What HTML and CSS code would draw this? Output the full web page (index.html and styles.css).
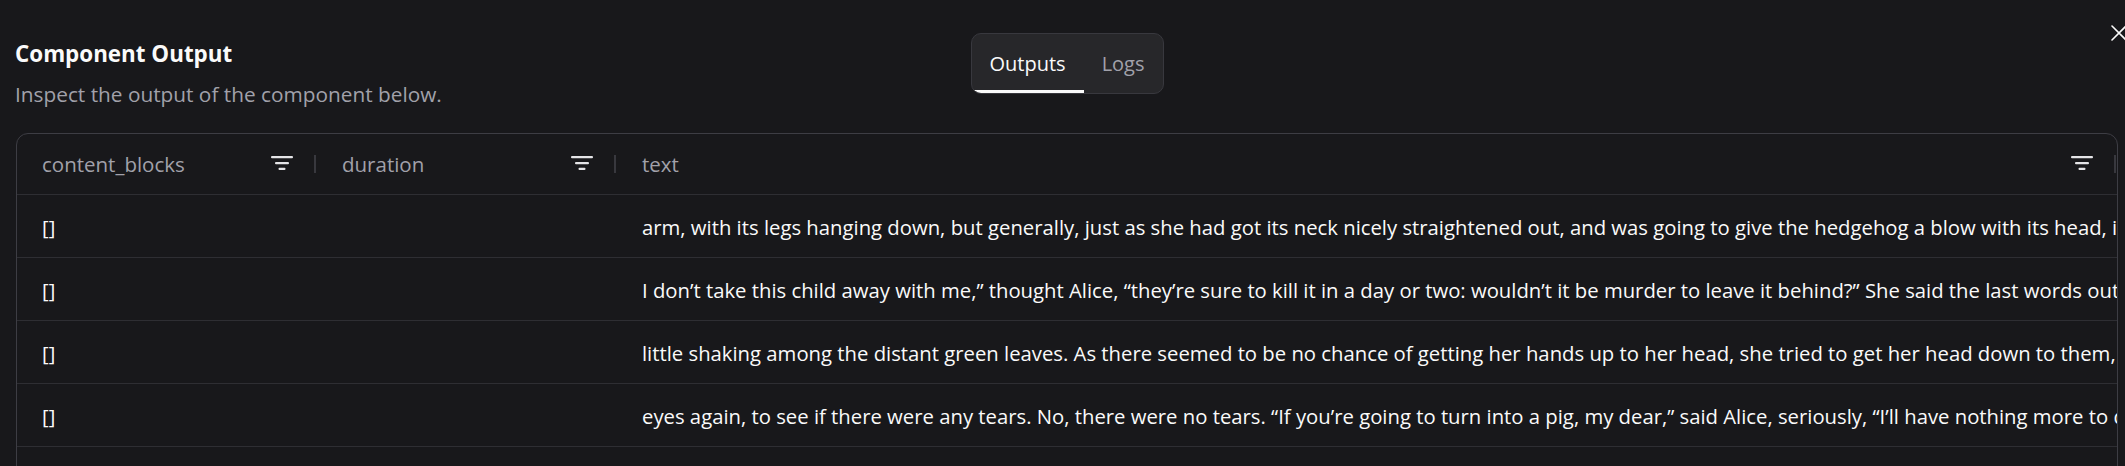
FILE: index.html
```html
<!DOCTYPE html>
<html lang="en">
<head>
    <meta charset="UTF-8">
    <meta name="viewport" content="width=device-width, initial-scale=1.0">
    <title>Component Output</title>
    <link rel="stylesheet" href="styles.css">
</head>
<body>

    <div class="dialog">

        <!-- Close button (top right, partly cut off) -->
        <button class="close-btn" aria-label="Close">
            <svg width="18" height="18" viewBox="0 0 18 18">
                <path d="M2 2 L16 16 M16 2 L2 16" stroke="#fafafa" stroke-width="1.6" stroke-linecap="round"/>
            </svg>
        </button>

        <div class="dialog-header">
            <div class="heading">
                <h2>Component Output</h2>
                <p>Inspect the output of the component below.</p>
            </div>
            <div class="tabs">
                <button class="tab active">Outputs</button>
                <button class="tab">Logs</button>
            </div>
        </div>

        <!-- Output table -->
        <div class="grid">
            <div class="grid-row grid-head">
                <div class="head-cell">
                    <span class="head-name">content_blocks</span>
                    <svg class="filter-icon" width="22" height="14" viewBox="0 0 22 14">
                        <rect x="0" y="0" width="22" height="2.2" rx="1"/>
                        <rect x="4" y="6" width="14" height="2.2" rx="1"/>
                        <rect x="7.5" y="11.8" width="7" height="2.2" rx="1"/>
                    </svg>
                    <span class="resizer"></span>
                </div>
                <div class="head-cell">
                    <span class="head-name">duration</span>
                    <svg class="filter-icon" width="22" height="14" viewBox="0 0 22 14">
                        <rect x="0" y="0" width="22" height="2.2" rx="1"/>
                        <rect x="4" y="6" width="14" height="2.2" rx="1"/>
                        <rect x="7.5" y="11.8" width="7" height="2.2" rx="1"/>
                    </svg>
                    <span class="resizer"></span>
                </div>
                <div class="head-cell">
                    <span class="head-name">text</span>
                    <svg class="filter-icon" width="22" height="14" viewBox="0 0 22 14">
                        <rect x="0" y="0" width="22" height="2.2" rx="1"/>
                        <rect x="4" y="6" width="14" height="2.2" rx="1"/>
                        <rect x="7.5" y="11.8" width="7" height="2.2" rx="1"/>
                    </svg>
                    <span class="resizer"></span>
                </div>
            </div>

            <div class="grid-row">
                <div class="cell">[]</div>
                <div class="cell"></div>
                <div class="cell">arm, with its legs hanging down, but generally, just as she had got its neck nicely straightened out, and was going to give the hedgehog a blow with its head, it would twist itself round and look up in her face</div>
            </div>
            <div class="grid-row">
                <div class="cell">[]</div>
                <div class="cell"></div>
                <div class="cell">I don’t take this child away with me,” thought Alice, “they’re sure to kill it in a day or two: wouldn’t it be murder to leave it behind?” She said the last words out loud, and the little thing grunted in reply</div>
            </div>
            <div class="grid-row">
                <div class="cell">[]</div>
                <div class="cell"></div>
                <div class="cell">little shaking among the distant green leaves. As there seemed to be no chance of getting her hands up to her head, she tried to get her head down to them, and was delighted to find</div>
            </div>
            <div class="grid-row">
                <div class="cell">[]</div>
                <div class="cell"></div>
                <div class="cell">eyes again, to see if there were any tears. No, there were no tears. “If you’re going to turn into a pig, my dear,” said Alice, seriously, “I’ll have nothing more to do with you.</div>
            </div>
            <div class="grid-row">
                <div class="cell">[]</div>
                <div class="cell"></div>
                <div class="cell">she found herself in a long, low hall, which was lit up by a row of lamps hanging from the roof.</div>
            </div>
        </div>

    </div>

</body>
</html>
```

FILE: styles.css
```css
html, body {
    height: 100%;
    overflow: hidden;
}

body {
    margin: 0;
    background-color: #18181b;
    color: #fafafa;
    font-family: "Open Sans", sans-serif;
}

.dialog {
    position: relative;
    height: 100%;
    overflow: hidden;
    padding: 0 7px 0 16px;
}

.close-btn {
    position: absolute;
    top: 24px;
    right: -3px;
    padding: 0;
    border: none;
    background: none;
    line-height: 0;
}

.dialog-header {
    display: grid;
    grid-template-columns: 1fr auto 1fr;
    align-items: start;
    padding-top: 33px;
}

.heading {
    padding-top: 6px;
}

.heading h2 {
    margin: 0 0 0 -1px;
    font-size: 22.4px;
    line-height: 30px;
    font-weight: 700;
    color: #fafafa;
}

.heading p {
    margin: 11px 0 0 -1px;
    font-size: 20.8px;
    line-height: 28px;
    color: #a1a1aa;
}

.tabs {
    display: flex;
    height: 59px;
    border: 1px solid #38383e;
    border-radius: 10px;
    background-color: #27272a;
    overflow: hidden;
}

.tab {
    padding: 0 18px;
    border: none;
    background: none;
    font-family: "Open Sans", sans-serif;
    font-size: 20px;
    font-weight: 500;
    color: #a1a1aa;
}

.tab.active {
    color: #fafafa;
    box-shadow: inset 0 -3px 0 #fafafa;
}

.grid {
    margin-top: 25px;
    border: 1px solid #3d3d44;
    border-radius: 12px;
}

.grid-row {
    display: grid;
    grid-template-columns: 300px 300px 1fr;
    height: 62px;
    border-top: 1px solid #2e2e33;
}

.grid-head {
    height: 60px;
    border-top: none;
}

.head-cell {
    display: flex;
    align-items: center;
    padding: 0 1px 0 25px;
}

.head-name {
    flex: 1;
    font-size: 20.5px;
    font-weight: 500;
    color: #a1a1aa;
    white-space: nowrap;
}

.filter-icon {
    fill: #e4e4e7;
    margin-top: -2px;
}

.resizer {
    width: 2px;
    height: 18px;
    margin-left: 21px;
    background-color: #38383e;
}

.cell {
    display: flex;
    align-items: center;
    padding: 2px 24px 0 25px;
    overflow: hidden;
    white-space: nowrap;
    font-size: 20.3px;
    color: #fafafa;
}
```
